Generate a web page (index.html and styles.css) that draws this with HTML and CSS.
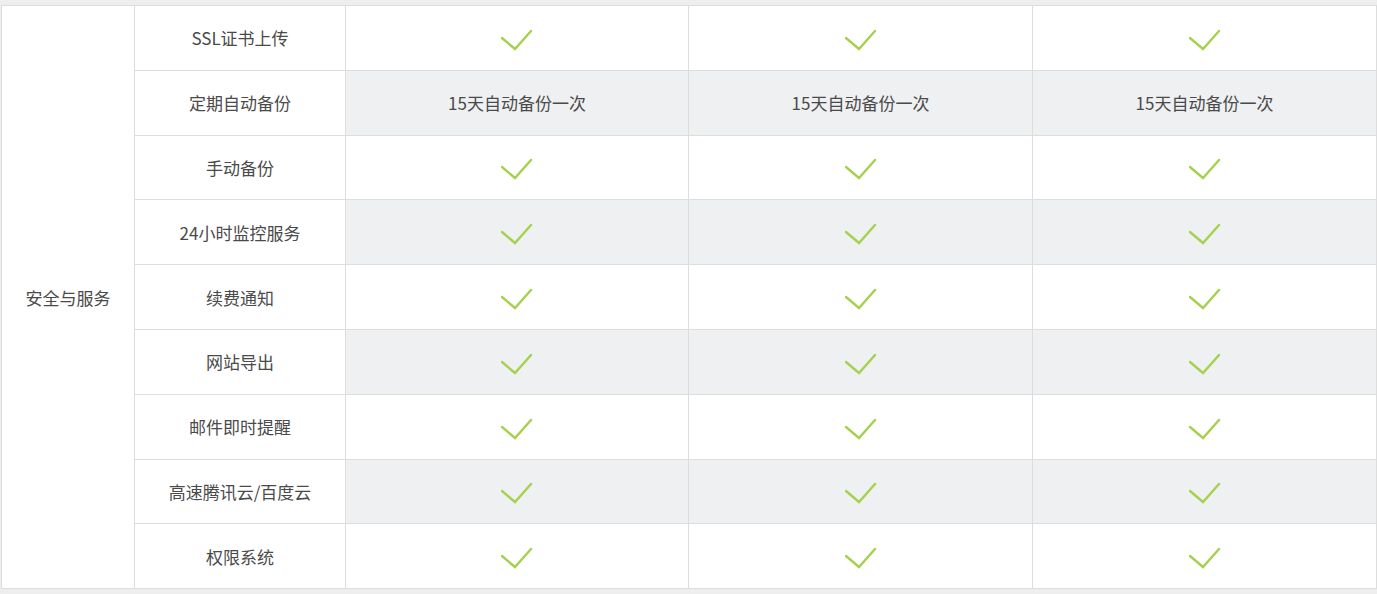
FILE: index.html
```html
<!DOCTYPE html>
<html lang="zh-CN">
<head>
<meta charset="utf-8">
<title>安全与服务</title>
<link rel="stylesheet" href="styles.css">
</head>
<body>
<table class="grid">
  <colgroup>
    <col class="c-cat"><col class="c-name"><col class="c-val1"><col class="c-val"><col class="c-val">
  </colgroup>
  <tbody>
    <tr>
      <td class="cat" rowspan="9">安全与服务</td>
      <td class="name">SSL证书上传</td>
      <td class="val"><svg class="ok" viewBox="0 0 32 24"><polyline points="1,10 14,21 30,3"/></svg></td>
      <td class="val"><svg class="ok" viewBox="0 0 32 24"><polyline points="1,10 14,21 30,3"/></svg></td>
      <td class="val"><svg class="ok" viewBox="0 0 32 24"><polyline points="1,10 14,21 30,3"/></svg></td>
    </tr>
    <tr class="alt">
      <td class="name">定期自动备份</td>
      <td class="val">15天自动备份一次</td>
      <td class="val">15天自动备份一次</td>
      <td class="val">15天自动备份一次</td>
    </tr>
    <tr>
      <td class="name">手动备份</td>
      <td class="val"><svg class="ok" viewBox="0 0 32 24"><polyline points="1,10 14,21 30,3"/></svg></td>
      <td class="val"><svg class="ok" viewBox="0 0 32 24"><polyline points="1,10 14,21 30,3"/></svg></td>
      <td class="val"><svg class="ok" viewBox="0 0 32 24"><polyline points="1,10 14,21 30,3"/></svg></td>
    </tr>
    <tr class="alt">
      <td class="name">24小时监控服务</td>
      <td class="val"><svg class="ok" viewBox="0 0 32 24"><polyline points="1,10 14,21 30,3"/></svg></td>
      <td class="val"><svg class="ok" viewBox="0 0 32 24"><polyline points="1,10 14,21 30,3"/></svg></td>
      <td class="val"><svg class="ok" viewBox="0 0 32 24"><polyline points="1,10 14,21 30,3"/></svg></td>
    </tr>
    <tr>
      <td class="name">续费通知</td>
      <td class="val"><svg class="ok" viewBox="0 0 32 24"><polyline points="1,10 14,21 30,3"/></svg></td>
      <td class="val"><svg class="ok" viewBox="0 0 32 24"><polyline points="1,10 14,21 30,3"/></svg></td>
      <td class="val"><svg class="ok" viewBox="0 0 32 24"><polyline points="1,10 14,21 30,3"/></svg></td>
    </tr>
    <tr class="alt">
      <td class="name">网站导出</td>
      <td class="val"><svg class="ok" viewBox="0 0 32 24"><polyline points="1,10 14,21 30,3"/></svg></td>
      <td class="val"><svg class="ok" viewBox="0 0 32 24"><polyline points="1,10 14,21 30,3"/></svg></td>
      <td class="val"><svg class="ok" viewBox="0 0 32 24"><polyline points="1,10 14,21 30,3"/></svg></td>
    </tr>
    <tr>
      <td class="name">邮件即时提醒</td>
      <td class="val"><svg class="ok" viewBox="0 0 32 24"><polyline points="1,10 14,21 30,3"/></svg></td>
      <td class="val"><svg class="ok" viewBox="0 0 32 24"><polyline points="1,10 14,21 30,3"/></svg></td>
      <td class="val"><svg class="ok" viewBox="0 0 32 24"><polyline points="1,10 14,21 30,3"/></svg></td>
    </tr>
    <tr class="alt">
      <td class="name">高速腾讯云/百度云</td>
      <td class="val"><svg class="ok" viewBox="0 0 32 24"><polyline points="1,10 14,21 30,3"/></svg></td>
      <td class="val"><svg class="ok" viewBox="0 0 32 24"><polyline points="1,10 14,21 30,3"/></svg></td>
      <td class="val"><svg class="ok" viewBox="0 0 32 24"><polyline points="1,10 14,21 30,3"/></svg></td>
    </tr>
    <tr>
      <td class="name">权限系统</td>
      <td class="val"><svg class="ok" viewBox="0 0 32 24"><polyline points="1,10 14,21 30,3"/></svg></td>
      <td class="val"><svg class="ok" viewBox="0 0 32 24"><polyline points="1,10 14,21 30,3"/></svg></td>
      <td class="val"><svg class="ok" viewBox="0 0 32 24"><polyline points="1,10 14,21 30,3"/></svg></td>
    </tr>
  </tbody>
</table>
</body>
</html>
```

FILE: styles.css
```css
html, body {
  margin: 0;
  padding: 0;
  background: #eeeeee;
}
body {
  padding: 5px 0 0 1px;
  font-family: "Noto Sans CJK SC", "Noto Sans", sans-serif;
  font-size: 17px;
  color: #4a4a4a;
}
.grid {
  border-collapse: collapse;
  table-layout: fixed;
  width: 1376px;
  background: #fff;
}
.c-cat { width: 133px; }
.c-name { width: 211px; }
.c-val1 { width: 343px; }
.c-val { width: 344px; }
.grid td {
  border: 1px solid #dddddd;
  height: 63.8px;
  padding: 0;
  text-align: center;
  vertical-align: middle;
  line-height: 1;
  font-weight: 400;
}
.grid .cat {
  background: #fff;
}
.grid .name {
  background: #fff;
}
.alt .val {
  background: #eef0f1;
}
.ok {
  display: block;
  width: 32px;
  height: 24px;
  margin: 4px auto 0;
  fill: none;
  stroke: #a5d14e;
  stroke-width: 2.4;
  stroke-linecap: round;
  stroke-linejoin: miter;
}
```
